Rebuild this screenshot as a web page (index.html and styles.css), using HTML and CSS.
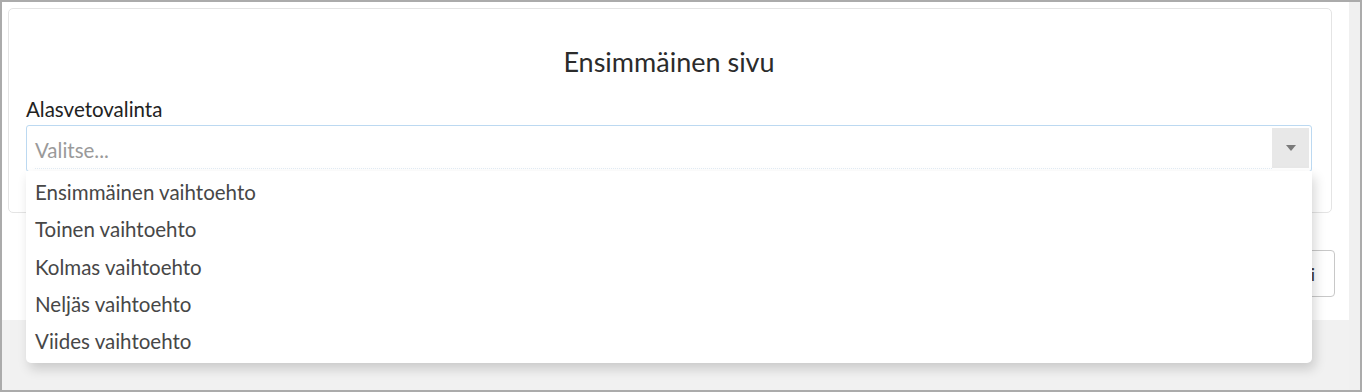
FILE: index.html
```html
<!DOCTYPE html>
<html lang="fi">

<head>
    <meta charset="UTF-8">
    <meta name="viewport" content="width=device-width, initial-scale=1.0">
    <title>Ensimmäinen sivu</title>
    <link rel="stylesheet" href="styles.css">
</head>

<body>
    <div class="frame">
        <div class="page">
            <div class="page-content">
                <div class="card">
                    <h1 class="title">Ensimmäinen sivu</h1>
                    <label class="field-label" for="choice">Alasvetovalinta</label>
                    <div class="select" id="choice">
                        <span class="placeholder">Valitse...</span>
                        <span class="select-arrow">
                            <svg width="10" height="6" viewBox="0 0 10 6"><path d="M0 0 L10 0 L5 6 Z" fill="#7a7a7a"/></svg>
                        </span>
                        <ul class="select-menu">
                            <li>Ensimmäinen vaihtoehto</li>
                            <li>Toinen vaihtoehto</li>
                            <li>Kolmas vaihtoehto</li>
                            <li>Neljäs vaihtoehto</li>
                            <li>Viides vaihtoehto</li>
                        </ul>
                    </div>
                </div>
                <div class="actions">
                    <button class="next-button">Lisää uusi</button>
                </div>
            </div>
        </div>
        <div class="side-strip"></div>
    </div>
</body>

</html>
```

FILE: styles.css
```css
body {
    font-family: Lato, "Liberation Sans", sans-serif;
    margin: 0;
    padding: 0;
    background-color: #fff;
}

.frame {
    width: 1362px;
    height: 392px;
    box-sizing: border-box;
    border: 2px solid #ababab;
    display: flex;
    overflow: hidden;
}

.page {
    flex: 1;
    background-color: #f1f1f1;
}

.page-content {
    height: 318px;
    background-color: #fff;
    padding: 6px 17px 0 6px;
    box-sizing: border-box;
}

.side-strip {
    width: 11px;
    background-color: #f0f0f0;
}

.card {
    border: 1px solid #e4e4e4;
    border-radius: 5px;
    padding: 37px 19px 0 17px;
    height: 205px;
    box-sizing: border-box;
}

.title {
    margin: 0 0 19px;
    text-align: center;
    font-size: 27px;
    font-weight: normal;
    color: #2b2b2b;
    line-height: 1.2;
}

.field-label {
    display: block;
    font-size: 20.5px;
    color: #222;
    margin-bottom: 3px;
    line-height: 1.2;
}

.select {
    position: relative;
    height: 47px;
    box-sizing: border-box;
    border: 1px solid #bcd9f1;
    border-radius: 3px;
    display: flex;
    align-items: center;
    padding: 0 2px 0 8px;
}

.placeholder {
    flex: 1;
    font-size: 20.5px;
    color: #9a9a9a;
    border-bottom: 1px dotted #e2ecf5;
    padding: 10px 0 6px;
}

.select-arrow {
    width: 37px;
    height: 40px;
    background-color: #e8e8e8;
    display: flex;
    align-items: center;
    justify-content: center;
}

.select-menu {
    position: absolute;
    top: 100%;
    left: -1px;
    right: -1px;
    margin: 0;
    padding: 3px 0;
    list-style: none;
    background-color: #fff;
    border-radius: 0 0 5px 5px;
    box-shadow: 3px 6px 12px rgba(0, 0, 0, 0.16);
    z-index: 10;
}

.select-menu li {
    height: 37.3px;
    line-height: 37.3px;
    padding: 0 9px;
    font-size: 20.5px;
    color: #474747;
}

.actions {
    display: flex;
    justify-content: flex-end;
    margin: 37px -3px 0 0;
}

.next-button {
    height: 47px;
    padding: 0 19px;
    border: 1px solid #c8c8c8;
    border-radius: 4px;
    background-color: #fff;
    font-family: Lato, "Liberation Sans", sans-serif;
    font-size: 18px;
    color: #333;
}
```
